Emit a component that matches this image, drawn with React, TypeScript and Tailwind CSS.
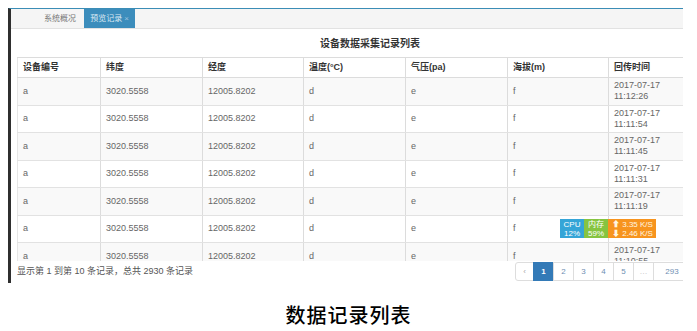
const cols = [
  { label: '设备编号', w: 83 },
  { label: '纬度', w: 102 },
  { label: '经度', w: 101 },
  { label: '温度(°C)', w: 102 },
  { label: '气压(pa)', w: 102 },
  { label: '海拔(m)', w: 101 },
  { label: '回传时间', w: 115 },
];

// row 6 sits under the net monitor widget, so its time is hidden
const times = ['11:12:26', '11:11:54', '11:11:45', '11:11:31', '11:11:19', '', '11:10:55'];

const pages = [
  { p: '‹', w: 'w-[19px]' },
  { p: '1', w: 'w-[21px]' },
  { p: '2', w: 'w-[21px]' },
  { p: '3', w: 'w-[21px]' },
  { p: '4', w: 'w-[21px]' },
  { p: '5', w: 'w-[21px]' },
  { p: '…', w: 'w-[21px]' },
  { p: '293', w: 'w-[38px]' },
];

function Monitor() {
  return (
    <div className="absolute left-[560px] top-[219px] flex h-[19px] text-[8px] leading-[9px] text-white">
      <div className="flex w-[24px] flex-col items-center justify-center bg-[#35a5d7]">
        <span>CPU</span>
        <span>12%</span>
      </div>
      <div className="flex w-[24px] flex-col items-center justify-center bg-[#86c440]">
        <span>内存</span>
        <span>59%</span>
      </div>
      <div className="flex w-[48px] flex-col justify-center bg-[#f7941e] pl-[4px] text-[#fff6e0]">
        <span>⬆ 3.35 K/S</span>
        <span>⬇ 2.46 K/S</span>
      </div>
    </div>
  );
}

export default function App() {
  return (
    <div
      className="relative h-[331px] w-[697px] overflow-hidden bg-white"
      style={{ fontFamily: '"Liberation Sans", "Noto Sans CJK SC", sans-serif' }}
    >
      <div className="pt-[8px] pl-[8px]">
        <div className="h-[275px] w-[675px] overflow-hidden border-t border-l-[3px] border-t-[#3b8db6] border-l-[#2f2f2f] bg-white">
          {/* tabs */}
          <div className="flex h-[20px] items-stretch border-b border-[#e2e2e2] bg-[#f5f5f5] text-[8px]">
            <div className="flex w-[73px] items-center justify-end pr-[8px] text-[#777]">系统概况</div>
            <div className="flex w-[51px] items-center justify-center bg-[#3c8dbc] text-[#dbe9f3]">
              预览记录 <span className="ml-[2px] text-[#9cc3de]">×</span>
            </div>
          </div>

          <div className="w-[720px] pl-[6px]">
            <div className="flex h-[28px] w-[706px] items-center justify-center text-[10px] font-bold text-[#333]">
              设备数据采集记录列表
            </div>

            <div className="h-[204px] overflow-hidden">
              <div className="flex h-[21px] border-y border-[#dcdcdc] text-[9px] font-bold text-[#333]">
                {cols.map((c, i) => (
                  <div
                    key={c.label}
                    className={`flex shrink-0 items-center px-[5px] ${i > 0 ? 'border-l border-[#dcdcdc]' : 'border-l border-[#e6e6e6]'}`}
                    style={{ width: c.w }}
                  >
                    {c.label}
                  </div>
                ))}
              </div>
              {times.map((t, r) => {
                const vals = ['a', '3020.5558', '12005.8202', 'd', 'e', 'f'];
                return (
                  <div
                    key={r}
                    className={`flex h-[27.5px] border-b border-[#e2e2e2] text-[9px] text-[#666] ${r % 2 === 0 ? 'bg-[#f9f9f9]' : 'bg-white'}`}
                  >
                    {vals.map((v, i) => (
                      <div
                        key={i}
                        className={`flex shrink-0 items-center px-[5px] ${i > 0 ? 'border-l border-[#dcdcdc]' : 'border-l border-[#e6e6e6]'}`}
                        style={{ width: cols[i].w }}
                      >
                        {v}
                      </div>
                    ))}
                    <div className="flex w-[115px] shrink-0 flex-col justify-center border-l border-[#dcdcdc] px-[5px] leading-[11px]">
                      {t && (
                        <>
                          <span>2017-07-17</span>
                          <span>{t}</span>
                        </>
                      )}
                    </div>
                  </div>
                );
              })}
            </div>

            <div className="flex h-[21px] items-center">
              <span className="w-[498px] shrink-0 text-[9px] text-[#555]">显示第 1 到第 10 条记录，总共 2930 条记录</span>
              <div className="flex h-[19px] text-[8px]">
                {pages.map(({ p, w }, i) => (
                  <div
                    key={p}
                    className={`flex items-center justify-center border ${w} ${i > 0 ? '-ml-px' : 'rounded-l-[3px]'} ${
                      p === '1'
                        ? 'border-[#337ab7] bg-[#337ab7] font-bold text-white'
                        : p === '‹'
                          ? 'border-[#dddddd] text-[#aaa]'
                          : p === '…'
                            ? 'border-[#dddddd] text-[#bbb]'
                            : 'border-[#dddddd] text-[#6f8fb3]'
                    }`}
                  >
                    {p}
                  </div>
                ))}
              </div>
            </div>
          </div>
        </div>
      </div>

      <Monitor />

      <div
        className="flex h-[64px] items-center justify-center text-[20px] font-medium tracking-[1px] text-black"
        style={{ fontFamily: '"Noto Sans CJK SC", sans-serif' }}
      >
        数据记录列表
      </div>
    </div>
  );
}
